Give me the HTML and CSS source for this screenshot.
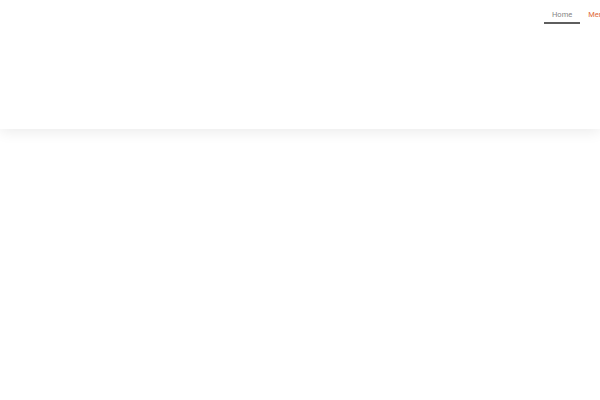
FILE: index.html
```html
<!DOCTYPE html>
<html>
<head>
<meta charset="utf-8">
<link rel="stylesheet" href="styles.css">
</head>
<body>
<header class="site-header">
  <div class="brand"></div>
  <nav class="main-nav">
    <a class="nav-item active" href="#">Home</a>
    <a class="nav-item accent" href="#">Menu</a>
    <a class="nav-item" href="#">About</a>
  </nav>
</header>
</body>
</html>
```
FILE: styles.css
```css
html, body {
  margin: 0;
  padding: 0;
  background: #ffffff;
  overflow: hidden;
  width: 600px;
  height: 400px;
}
body {
  font-family: Roboto, "Liberation Sans", sans-serif;
}
.site-header {
  height: 129px;
  background: #ffffff;
  box-shadow: 0 2px 14px rgba(0, 0, 0, 0.09);
  display: grid;
  grid-template-columns: 544px max-content;
  align-items: start;
}
.main-nav {
  display: flex;
  white-space: nowrap;
}
.nav-item {
  font-size: 7.5px;
  font-weight: 400;
  line-height: 10px;
  padding: 10px 8px 2px;
  color: #8a8a8a;
  text-decoration: none;
  border-bottom: 2px solid transparent;
}
.nav-item.active {
  color: #858585;
  border-bottom-color: #5e5e5e;
}
.nav-item.accent {
  color: #e0693a;
}
```
